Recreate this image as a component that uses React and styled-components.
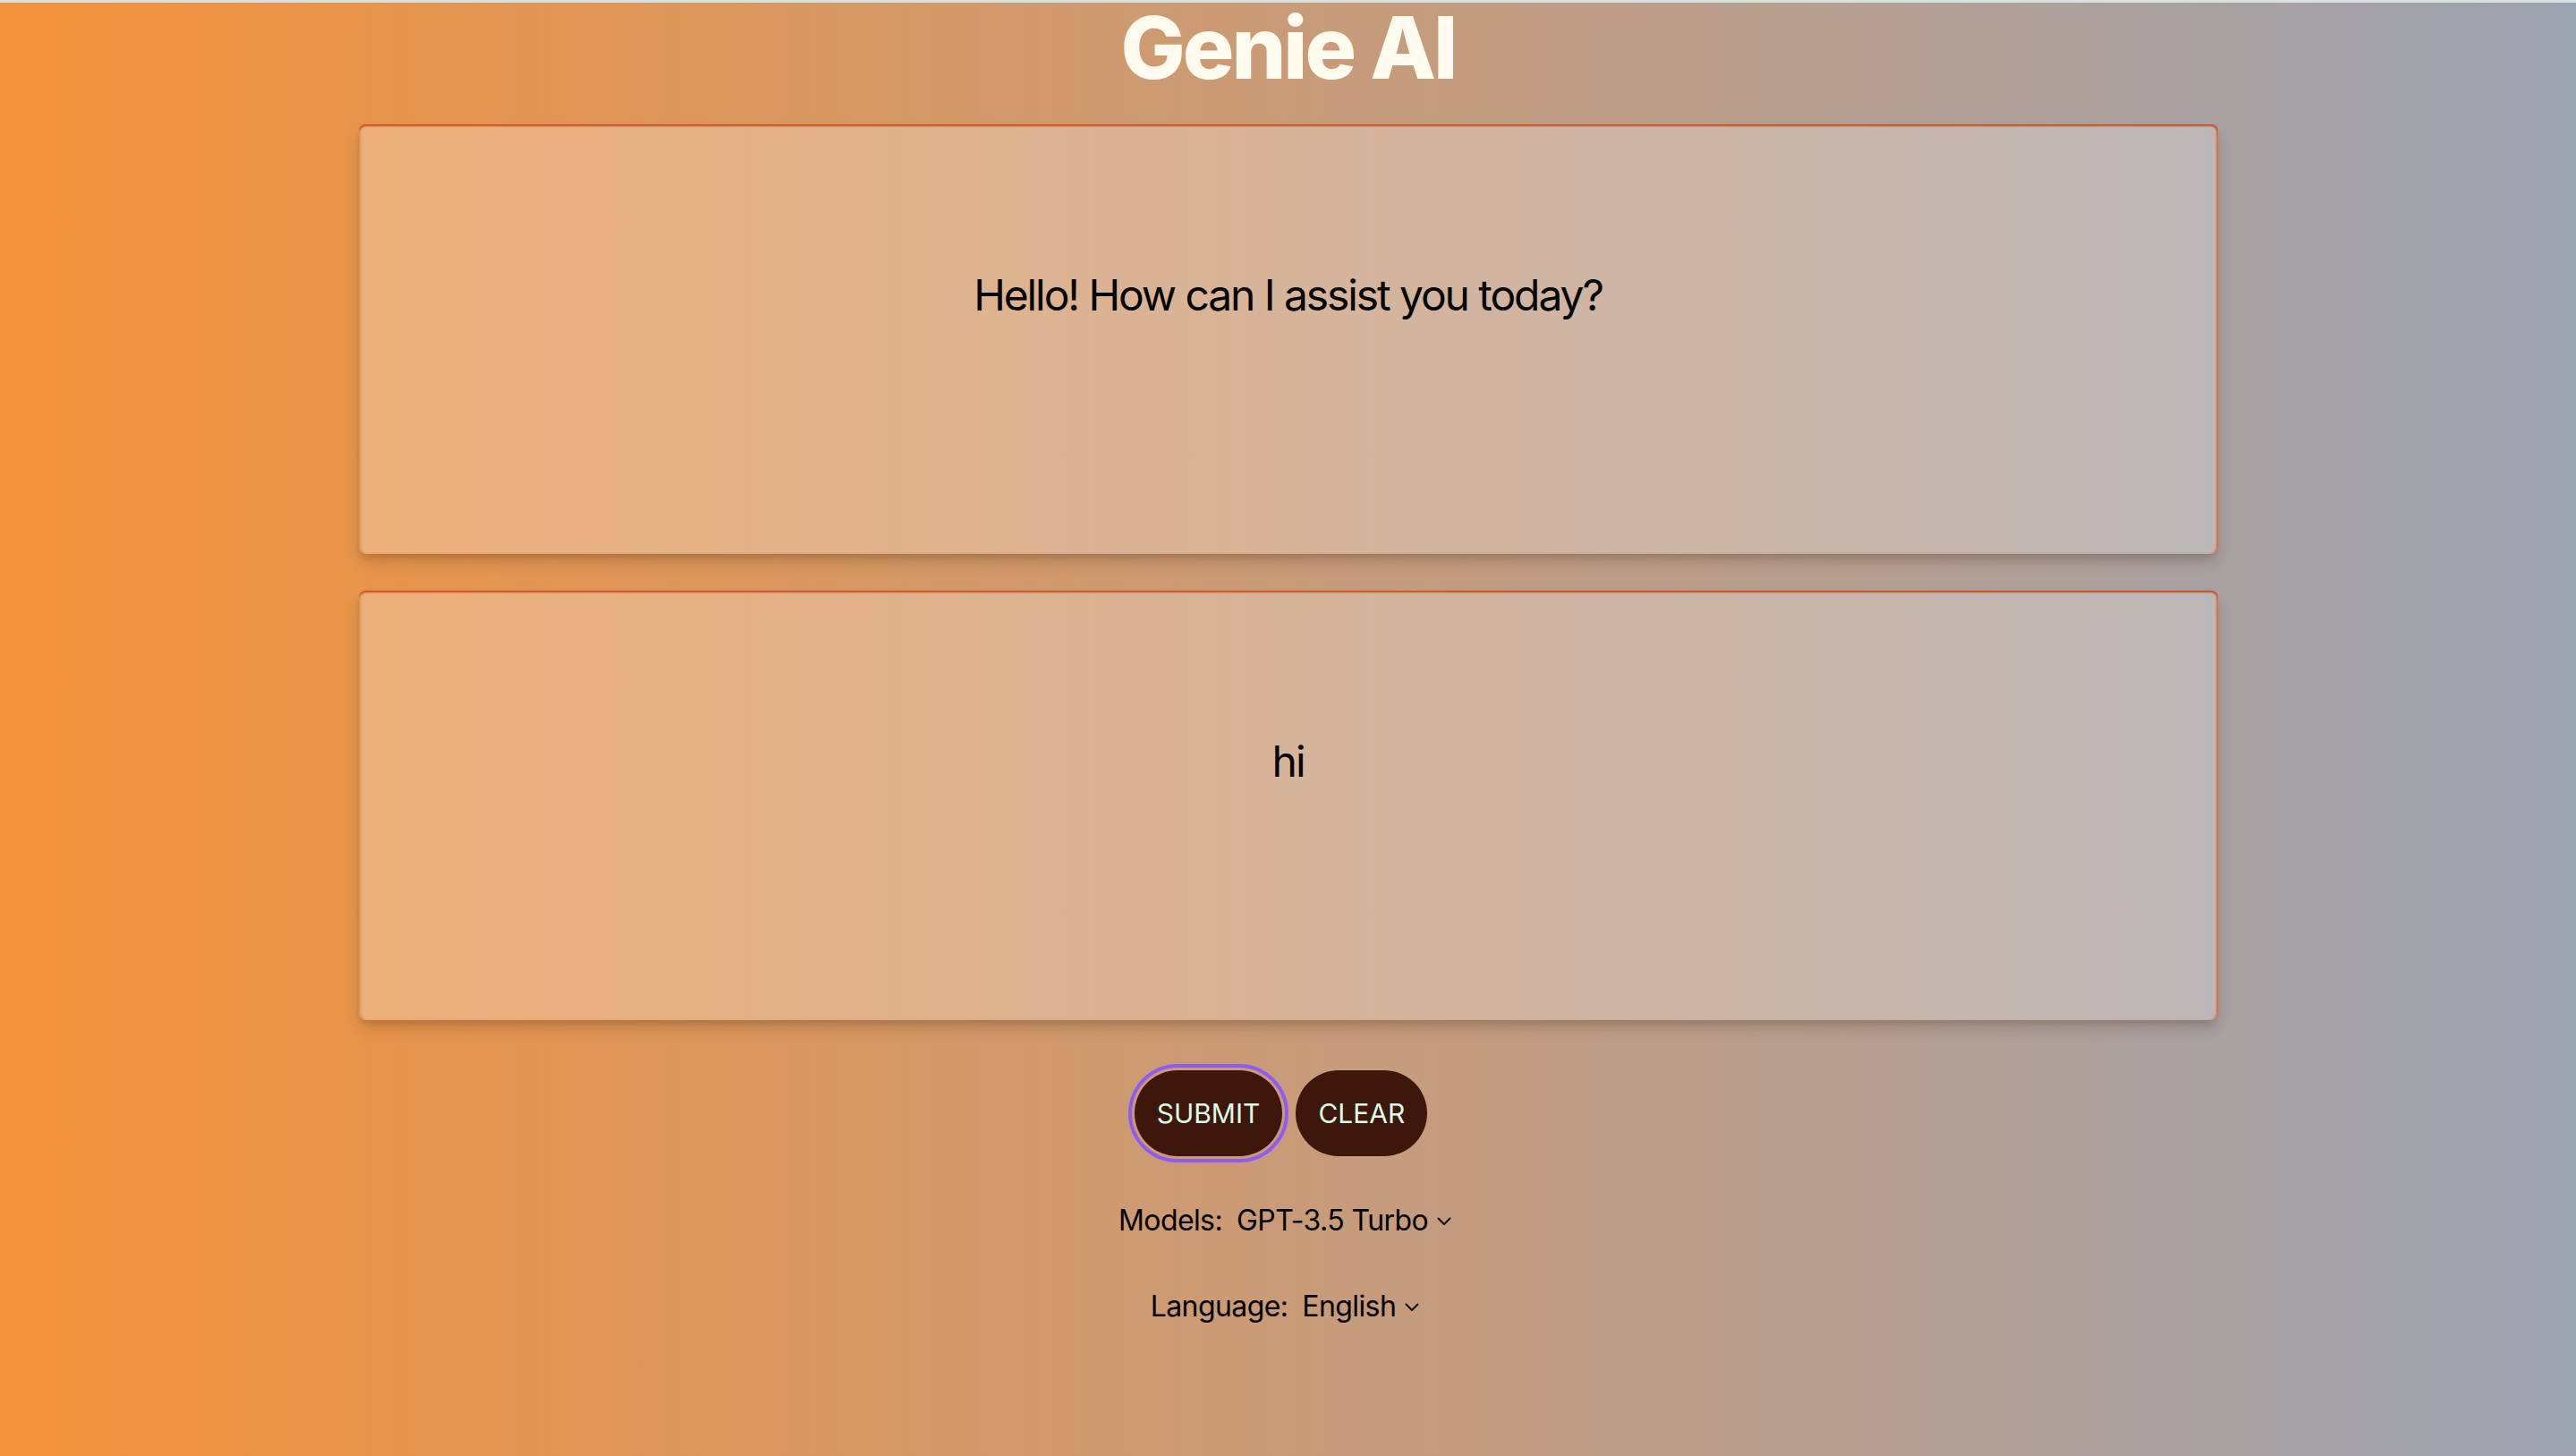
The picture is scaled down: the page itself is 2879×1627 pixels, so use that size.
import React from "react";
import styled, { createGlobalStyle } from "styled-components";

const GlobalStyle = createGlobalStyle`
  html, body {
    margin: 0;
    padding: 0;
  }
  body {
    font-family: Inter, "Noto Sans", "Liberation Sans", sans-serif;
  }
  * { box-sizing: border-box; }
`;

const Page = styled.div`
  min-height: 100vh;
  border-top: 3px solid #d6e0dc;
  background: linear-gradient(90deg, #f4923a 0%, #c99b78 50%, #9ca3b1 100%);
  display: flex;
  flex-direction: column;
  align-items: center;
  font-family: Inter, "Noto Sans", "Liberation Sans", sans-serif;
`;

const Title = styled.h1`
  margin: 2px 0 0;
  font-size: 96px;
  line-height: 96px;
  font-weight: 800;
  letter-spacing: -3px;
  color: #fffbef;
`;

const Panels = styled.div`
  width: 2078px;
  margin-top: 38px;
  display: flex;
  flex-direction: column;
  gap: 41px;
`;

const Panel = styled.div`
  height: 480px;
  border-radius: 8px;
  background: linear-gradient(90deg, rgba(255, 255, 255, 0.26), rgba(255, 255, 255, 0.24));
  box-shadow:
    inset 0 3px 2px -1px rgba(198, 72, 22, 0.95),
    inset -3px 0 2px -1px rgba(222, 96, 44, 0.85),
    inset 3px 0 3px -1px rgba(160, 80, 30, 0.3),
    0 10px 16px -2px rgba(60, 30, 10, 0.22),
    0 4px 6px -2px rgba(60, 30, 10, 0.12);
  padding-top: 155px;
  text-align: center;
  font-size: 48px;
  line-height: 72px;
  letter-spacing: -2.1px;
  color: #050505;
`;

const ButtonRow = styled.div`
  margin-top: 56px;
  padding-right: 16px;
  display: flex;
  gap: 15px;
`;

const PillButton = styled.button`
  height: 96px;
  padding: 0 25px;
  border: none;
  border-radius: 48px;
  background: #3d160c;
  color: #dcfce7;
  font-family: Inter, "Noto Sans", "Liberation Sans", sans-serif;
  font-size: 30px;
  font-weight: 400;
  cursor: pointer;
  outline: ${(p) => (p.$focused ? "4px solid #8b5cf6" : "none")};
  outline-offset: 3px;
`;

const Controls = styled.div`
  margin-top: 48px;
  display: flex;
  flex-direction: column;
  align-items: center;
  gap: 48px;
  padding-right: 7px;
`;

const ControlRow = styled.div`
  display: flex;
  align-items: center;
  font-size: 32px;
  line-height: 48px;
  letter-spacing: -0.6px;
  color: #000;
`;

const Label = styled.span`
  margin-right: 16px;
`;

const Value = styled.span`
  display: inline-flex;
  align-items: center;
  gap: 10px;
`;

const Chevron = () => (
  <svg width="16" height="10" viewBox="0 0 16 10" fill="none" style={{ marginTop: 2 }}>
    <path d="M1.5 1.5 L8 8 L14.5 1.5" stroke="#111" strokeWidth="2" strokeLinecap="round" strokeLinejoin="round" />
  </svg>
);

export default function App() {
  return (
    <>
      <GlobalStyle />
      <Page>
        <Title>Genie AI</Title>
        <Panels>
          <Panel>Hello! How can I assist you today?</Panel>
          <Panel>hi</Panel>
        </Panels>
        <ButtonRow>
          <PillButton $focused>SUBMIT</PillButton>
          <PillButton>CLEAR</PillButton>
        </ButtonRow>
        <Controls>
          <ControlRow>
            <Label>Models:</Label>
            <Value>
              GPT-3.5 Turbo
              <Chevron />
            </Value>
          </ControlRow>
          <ControlRow>
            <Label>Language:</Label>
            <Value>
              English
              <Chevron />
            </Value>
          </ControlRow>
        </Controls>
      </Page>
    </>
  );
}
